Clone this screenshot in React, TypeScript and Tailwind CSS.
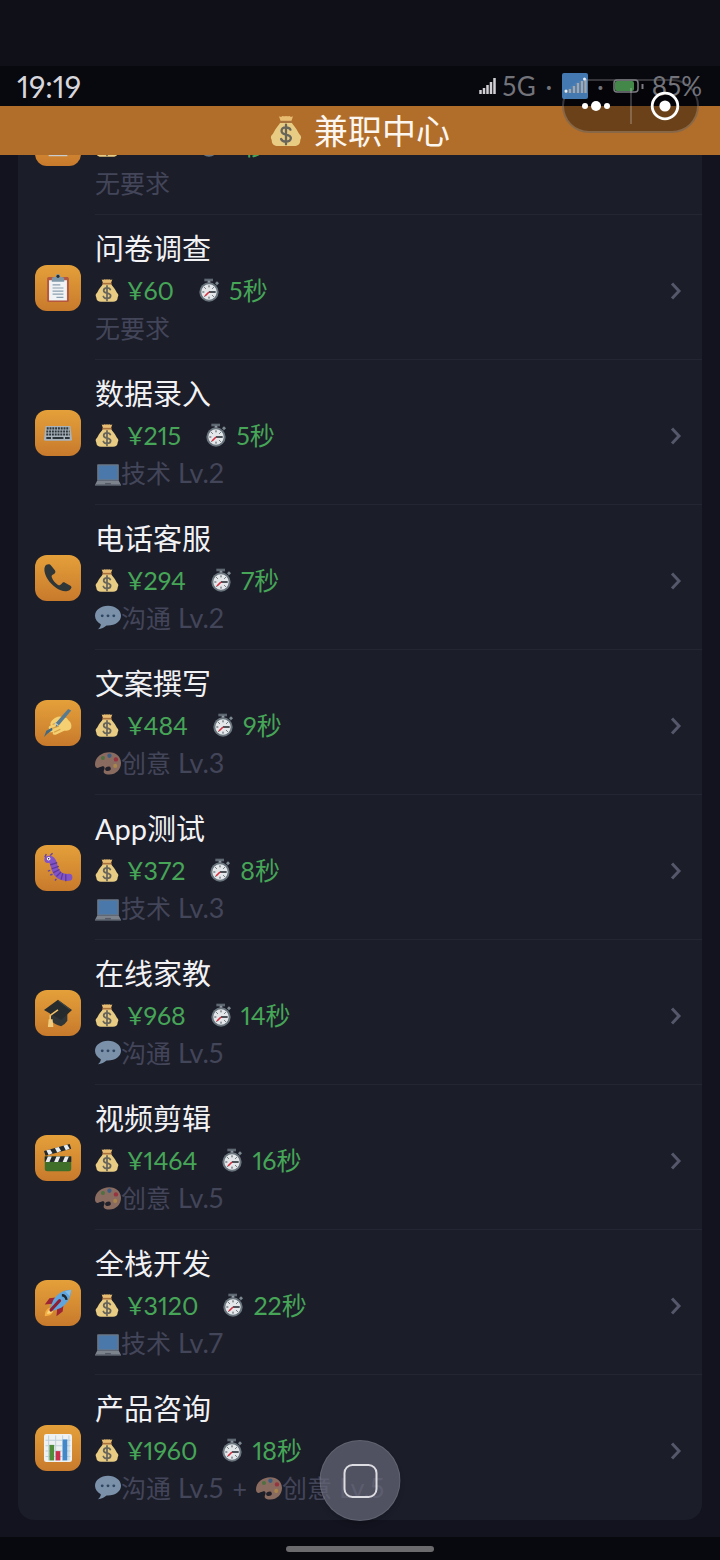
import type { ReactNode } from 'react';

type Skill = { kind: 'tech' | 'talk' | 'art'; level: number };
type Job = { name: string; pay: number; seconds: number; icon: ReactNode; skills: Skill[] };

function MoneyBag({ className }: { className: string }) {
  return (
    <svg viewBox="0 0 36 36" className={className} aria-hidden="true">
      <path d="M10 1q2 2 4 0q2 1 4 0q2 1 4 0q2 2 4 0l-2 6H12z" fill="#e8bd72" />
      <path d="M12 8h12c2 4 6 7 8 12 1 2 3 3 3 5s-1 2-1 4c0 4-3 6-7 6H9c-4 0-7-2-7-6 0-2-1-2-1-4s2-3 3-5c2-5 6-8 8-12z" fill="#e9cc83" />
      <path d="M11 6.500h14v2.500H11z" fill="#a9713c" />
      <path d="M23 16.500c-1-2-3-2.500-5-2.500-3 0-5 1.500-5 4s2 3.300 5 4 5.500 1.500 5.500 4-2.500 4-5.500 4c-2.500 0-4.700-1-5.500-3M18 11v22" fill="none" stroke="#68655a" strokeWidth="2.600" strokeLinecap="round" />
    </svg>
  );
}

function Stopwatch() {
  return (
    <svg viewBox="0 0 36 36" className="h-6 w-6 shrink-0" aria-hidden="true">
      <path d="M11 1h13v4H11z" fill="#5d6872" />
      <path d="M16 4h4v5h-4z" fill="#8b969e" />
      <path d="M27 8l3-3 3 3-3 3z" fill="#7d8991" />
      <circle cx="18" cy="21" r="14.500" fill="#69747d" />
      <circle cx="18" cy="21" r="11.500" fill="#e3e7ea" />
      <path d="M18 11v3M18 28v3M8 21h3M11 14l2 2M25 14l-2 2M11 28l2-2M25 28l-2-2" stroke="#444d55" strokeWidth="1.500" />
      <path d="M18 21h10" stroke="#30363c" strokeWidth="2.500" />
      <path d="M18 21l-6 6" stroke="#d5303f" strokeWidth="2.500" />
    </svg>
  );
}

function SkillIcon({ kind }: { kind: Skill['kind'] }) {
  if (kind === 'tech') {
    return (
      <svg viewBox="0 0 36 36" className="mt-1 size-[26px] shrink-0" aria-hidden="true">
        <path d="M4 3h28q1 0 1 1v22H3V4q0-1 1-1z" fill="#6b7684" />
        <path d="M5 5h26v19H5z" fill="#4a78aa" />
        <path d="M3 26h30l3 6H0z" fill="#7d838c" />
        <path d="M0 31h36v2H0z" fill="#555c67" />
        <path d="M14 29h8v2h-8z" fill="#535965" />
      </svg>
    );
  }
  if (kind === 'talk') {
    return (
      <svg viewBox="0 0 36 36" className="size-[26px] shrink-0" aria-hidden="true">
        <path d="M18 1C8 1 0 7 0 15c0 5 3 9 8 11.500 0 3-1.500 5-4 7 5 0 9-2.500 12-5h2c10 0 18-5.500 18-13.500S28 1 18 1z" fill="#7b91a9" />
        <circle cx="10" cy="15" r="2" fill="#2e4662" />
        <circle cx="18" cy="15" r="2" fill="#2e4662" />
        <circle cx="26" cy="15" r="2" fill="#2e4662" />
      </svg>
    );
  }
  return (
    <svg viewBox="0 0 36 36" className="size-[26px] shrink-0" aria-hidden="true">
      <path d="M20 3C9 3 0 10 0 20c0 4 3 6 6 4 3-1 6-3 7 0 1 2-1 4-1 6 0 3 4 4 8 4 9 0 16-7 16-16S29 3 20 3z" fill="#8a6b60" />
      <circle cx="11" cy="11" r="2.800" fill="#4f7041" />
      <circle cx="20" cy="8" r="3" fill="#3c5d80" />
      <circle cx="29" cy="13" r="3" fill="#96343f" />
      <circle cx="28" cy="22" r="2.800" fill="#a9854b" />
      <ellipse cx="18" cy="26" rx="4" ry="3" fill="#22202a" transform="rotate(-18 18 26)" />
    </svg>
  );
}

const flyerIcon = (
  <>
    <path d="M6 3h24v32H6z" fill="#c9cdd0" />
    <path d="M9 10h18M9 15h18M9 20h18M9 25h18" stroke="#8a9299" strokeWidth="2" />
  </>
);
const clipboardIcon = (
  <>
    <rect x="4" y="4" width="28" height="32" rx="2" fill="#b5573f" />
    <path d="M6.500 8h23v26h-23z" fill="#f0f3f5" />
    <path d="M10 6q0-2 3-2h2q0-4 3-4t3 4h2q3 0 3 2v4H10z" fill="#7f98a8" />
    <circle cx="18" cy="3" r="2" fill="#252c31" />
    <path d="M11 14h10M11 18h14M11 22h14M11 26h14M16 30h9" stroke="#8ba0ae" strokeWidth="1.600" />
  </>
);
const keyboardIcon = (
  <>
    <path d="M2 9h32l2 17q0 2-2 2H2q-2 0-2-2z" fill="#a8b3bb" />
    <path d="M3.500 12h29M3 16h30M3 20h30" stroke="#2b3439" strokeWidth="2.700" strokeDasharray="2.500 1.100" />
    <path d="M3 24.500h6M27 24.500h6M11 24.500h14" stroke="#2b3439" strokeWidth="2.500" />
  </>
);
const phoneIcon = (
  <path d="M3 1C-1 4 0 12 5 20c6 9 16 16 24 15 3 0 5-2 6-4 1-1 0-2-1-3l-7-4c-2-1-3 0-4 1-2 2-3 3-5 2-3-2-7-6-8-10-1-2 1-3 3-4 2-2 2-3 1-5L9 2C8 0 5 0 3 1z" fill="#2e3638" />
);
const writingIcon = (
  <>
    <path d="M11 14c4-4 9-6 14-3 3 0 5 1 6 3 3 2 5 6 4 10-1 3-5 4-9 4L15 33c-3 1-5-1-3-3H8c-3 0-3-3-1-4-2-2-1-4 2-5-2-2 0-5 2-7z" fill="#f4d072" />
    <path d="M11 20l9-4M10 25l9-3M13 30l8-4" stroke="#d59e42" strokeWidth="1.500" />
    <path d="M31 0l4 2-15 18-5 3 1-6z" fill="#557a91" />
    <path d="M0 36l3-8 7-4 1 3-7 5z" fill="#426980" />
    <path d="M14 18l4 3" stroke="#bccbd0" strokeWidth="1.500" />
  </>
);
const wormIcon = (
  <>
    <path d="M5 7c7-1 7 5 9 12 2 6 6 12 18 11" fill="none" stroke="#8153c4" strokeWidth="9" strokeLinecap="round" />
    <path d="M8 14l9-3M10 19l9-3M12 24l8-4M16 29l6-6M22 33l2-8M28 35v-9" stroke="#5a379a" strokeWidth="1.600" />
    <path d="M1 4l2-4M8 2l3-3M8 21l-3 1M11 26l-3 1M16 32l-2 2" stroke="#6743a8" strokeWidth="1.800" />
    <circle cx="6" cy="6" r="2.300" fill="#fff" />
    <circle cx="6" cy="6" r="1" fill="#222" />
  </>
);
const capIcon = (
  <>
    <path d="M8 14h22v14q-3 5-8 7-8-2-14-8z" fill="#303638" />
    <path d="M18 1L36 14 22 27 0 14z" fill="#262c2e" />
    <path d="M18 2L34 14" stroke="#4a5152" strokeWidth="1" />
    <path d="M18 14L8 21v6" fill="none" stroke="#f0c066" strokeWidth="2" />
    <path d="M6 26h5l1 10H5z" fill="#f1cc7e" />
  </>
);
const clapperIcon = (
  <>
    <path d="M1 16h34v16q0 3-3 3H4q-3 0-3-3z" fill="#3f6f29" />
    <path d="M1 16h34v7H1z" fill="#23292b" />
    <path d="M0 9L33 0l2 6L2 15z" fill="#23292b" />
    <path d="M5 16h5l-3 7H2zM16 16h5l-3 7h-5zM27 16h5l-3 7h-5zM3 8l5-1 3 5-5 2zM14 5l5-1 3 5-5 2zM25 2l5-1 3 5-5 2z" fill="#e9ecec" />
  </>
);
const rocketIcon = (
  <>
    <path d="M1 35c0-6 2-9 6-11l5 5c-2 4-5 6-11 6z" fill="#f4ae43" />
    <path d="M4 32c0-3 2-5 4-6l3 3c-1 2-4 3-7 3z" fill="#f8d77e" />
    <path d="M15 11L7 12 1 20l10-1zM25 21l-1 8-8 6 1-10z" fill="#9d2435" />
    <path d="M35 1C25 1 17 6 12 14l-4 10 4 4 10-4c8-5 13-13 13-23z" fill="#60a6dd" />
    <path d="M20 15L9 27" stroke="#8d2034" strokeWidth="4" strokeLinecap="round" />
    <path d="M23 8q5 0 6 6" fill="none" stroke="#1f292f" strokeWidth="3" />
    <path d="M35 1l-2 8-6-6z" fill="#84bde6" />
  </>
);
const chartIcon = (
  <>
    <rect width="36" height="36" rx="3" fill="#eef1f2" />
    <path d="M2 8h32M2 15h32M2 22h32M2 29h32M6 2v32M15 2v32M24 2v32M32 2v32" stroke="#bdd0da" strokeWidth="1.300" />
    <path d="M7 14h6v20H7z" fill="#4f8d3b" />
    <path d="M15 22h6v12h-6z" fill="#c9304c" />
    <path d="M24 7h6v27h-6z" fill="#4388c9" />
  </>
);

const jobs: Job[] = [
  { name: '发传单', pay: 30, seconds: 5, icon: flyerIcon, skills: [] },
  { name: '问卷调查', pay: 60, seconds: 5, icon: clipboardIcon, skills: [] },
  { name: '数据录入', pay: 215, seconds: 5, icon: keyboardIcon, skills: [{ kind: 'tech', level: 2 }] },
  { name: '电话客服', pay: 294, seconds: 7, icon: phoneIcon, skills: [{ kind: 'talk', level: 2 }] },
  { name: '文案撰写', pay: 484, seconds: 9, icon: writingIcon, skills: [{ kind: 'art', level: 3 }] },
  { name: 'App测试', pay: 372, seconds: 8, icon: wormIcon, skills: [{ kind: 'tech', level: 3 }] },
  { name: '在线家教', pay: 968, seconds: 14, icon: capIcon, skills: [{ kind: 'talk', level: 5 }] },
  { name: '视频剪辑', pay: 1464, seconds: 16, icon: clapperIcon, skills: [{ kind: 'art', level: 5 }] },
  { name: '全栈开发', pay: 3120, seconds: 22, icon: rocketIcon, skills: [{ kind: 'tech', level: 7 }] },
  { name: '产品咨询', pay: 1960, seconds: 18, icon: chartIcon, skills: [{ kind: 'talk', level: 5 }, { kind: 'art', level: 5 }] },
];

const skillNames = { tech: '技术', talk: '沟通', art: '创意' };

function JobRow({ job, last }: { job: Job; last: boolean }) {
  return (
    <li>
      <a href="#job" className="flex h-[145px] items-stretch pl-[17px]">
        <span className="mr-[14px] flex size-[46px] shrink-0 items-center justify-center self-center rounded-xl bg-linear-to-b from-[#e4a03a] to-[#c87a2c]">
          <svg viewBox="0 0 36 36" className="size-7 overflow-visible" aria-hidden="true">{job.icon}</svg>
        </span>
        <span className={`flex min-w-0 grow items-center border-b pr-5 ${last ? 'border-transparent' : 'border-[#252633]'}`}>
          <span className="flex min-w-0 grow flex-col">
            <span className="text-[29px] leading-[42px] text-[#f2f2f5]">{job.name}</span>
            <span className="flex h-10 items-center gap-2 text-[25px] leading-10 text-[#46a557] proportional-nums">
              <MoneyBag className="h-[25px] w-6 shrink-0" />
              <span>¥{job.pay}</span>
              <span className="ml-[15px] flex items-center gap-2">
                <Stopwatch />
                {job.seconds}秒
              </span>
            </span>
            <span className="flex h-9 items-center text-[25px] leading-9 whitespace-nowrap text-[#434559] proportional-nums">
              {job.skills.length === 0 && '无要求'}
              {job.skills.map((skill, i) => (
                <span key={skill.kind} className="flex items-center">
                  {i > 0 && <span className="px-[9px]">+</span>}
                  <SkillIcon kind={skill.kind} />
                  {skillNames[skill.kind]}
                  <span className="ml-[7px] text-[27px]">Lv.{skill.level}</span>
                </span>
              ))}
            </span>
          </span>
          <svg viewBox="0 0 12 18" className="mt-2 h-[18px] w-3 shrink-0" aria-hidden="true">
            <path d="M2 1.500L9 9l-7 7.500" fill="none" stroke="#55576a" strokeWidth="3" />
          </svg>
        </span>
      </a>
    </li>
  );
}

function StatusBar() {
  return (
    <div className="pointer-events-none relative z-10 flex h-10 items-center pr-[18px] pl-[17px] text-[26px] leading-10 text-[#73737a]">
      <span className="grow text-[30px] text-[#d6d6dc] proportional-nums">19:19</span>
      <svg viewBox="0 0 17 16" className="mr-[6px] h-4 w-[17px]" aria-hidden="true">
        <path d="M1.500 12v4M5 10v6M8.500 7v9M12 4v12M15.500 0v16" stroke="#d0d0d5" strokeWidth="2.500" />
      </svg>
      <span>5G</span>
      <span className="w-[26px] text-center">·</span>
      <svg viewBox="0 0 26 26" className="size-[26px]" aria-hidden="true">
        <rect width="26" height="26" rx="2" fill="#4a86c2" opacity="0.900" />
        <path d="M4 18v2M8 16v4M12 13v7M16 10v10M20 8v12M23.500 6v14" stroke="#a3a6aa" strokeWidth="2.400" />
        <circle cx="4" cy="18" r="1.500" fill="#e8eef4" />
        <circle cx="22.500" cy="6" r="1.500" fill="#e8eef4" />
      </svg>
      <span className="w-[25px] text-center">·</span>
      <svg viewBox="0 0 31 14" className="mr-2 h-[14px] w-[31px]" aria-hidden="true">
        <rect x="1" y="1" width="24" height="12" rx="3" fill="none" stroke="#7b7b82" strokeWidth="1.500" />
        <rect x="2" y="2" width="19" height="10" rx="2" fill="#438849" />
        <path d="M29.500 5v5" stroke="#7b7b82" strokeWidth="2" />
      </svg>
      <span className="proportional-nums">85%</span>
    </div>
  );
}

export default function App() {
  return (
    <div className="relative flex min-h-screen flex-col bg-[#12131e] font-[Lato,'Noto_Sans_CJK_SC',sans-serif]">
      <div className="bg-[#101018] pt-[66px]">
        <div className="bg-[#08080f]">
          <StatusBar />
        </div>
      </div>
      <header className="flex h-[49px] items-center justify-center gap-3 bg-[#b16d2a]">
        <MoneyBag className="h-[34px] w-8" />
        <h1 className="text-[34px] leading-[48px] text-[#fbf6ef]">兼职中心</h1>
      </header>
      <main className="grow overflow-hidden px-[18px] pb-[17px]">
        <ul className="-mt-[85px] rounded-2xl bg-[#1b1d29]">
          {jobs.map((job, i) => (
            <JobRow key={job.name} job={job} last={i === jobs.length - 1} />
          ))}
        </ul>
      </main>
      <footer className="flex h-[23px] items-center justify-center bg-[#08080f]">
        <div className="h-[6px] w-[148px] rounded-full bg-[#6b6b6e]" />
      </footer>

      <div className="absolute top-[79px] right-[21px] h-[54px] w-[137px] rounded-full border-2 border-white/20 bg-black/40" />
      <div className="absolute top-[79px] right-[21px] z-20 flex h-[54px] w-[137px] items-center">
        <button type="button" aria-label="更多" className="flex h-full flex-1 items-center justify-center">
          <svg viewBox="0 0 30 12" className="h-3 w-[30px]" aria-hidden="true">
            <circle cx="4" cy="6" r="3" fill="#fff" />
            <circle cx="15" cy="6" r="5" fill="#fff" />
            <circle cx="26" cy="6" r="3" fill="#fff" />
          </svg>
        </button>
        <span className="h-9 w-[2px] bg-white/20" />
        <button type="button" aria-label="关闭" className="flex h-full flex-1 items-center justify-center">
          <svg viewBox="0 0 30 30" className="size-[30px]" aria-hidden="true">
            <circle cx="15" cy="15" r="12.800" fill="none" stroke="#fff" strokeWidth="2.800" />
            <circle cx="15" cy="15" r="5.600" fill="#fff" />
          </svg>
        </button>
      </div>

      <button
        type="button"
        aria-label="主页"
        className="absolute bottom-[39px] left-1/2 flex size-[81px] -translate-x-1/2 items-center justify-center rounded-full border border-white/10 bg-[#666879]/70 shadow-md"
      >
        <span className="size-[34px] rounded-[9px] border-2 border-[#dcdce2]" />
      </button>
    </div>
  );
}
